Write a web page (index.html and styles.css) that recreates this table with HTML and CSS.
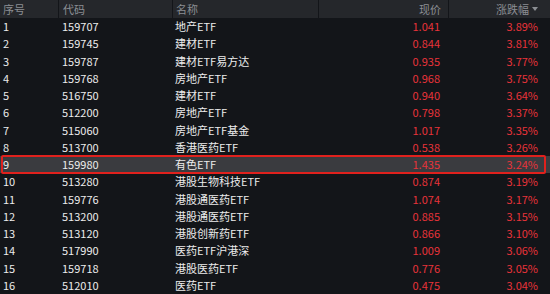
FILE: index.html
```html
<!DOCTYPE html>
<html lang="zh">
<head>
<meta charset="utf-8">
<link rel="stylesheet" href="styles.css">
</head>
<body>
<div class="grid">
  <div class="row head">
    <div class="c idx">序号</div>
    <div class="c code sep">代码</div>
    <div class="c name sep">名称</div>
    <div class="c price sep">现价</div>
    <div class="c pct sep">涨跌幅<span class="arrow"></span></div>
  </div>
  <div class="row"><div class="c idx">1</div><div class="c code">159707</div><div class="c name">地产ETF</div><div class="c price">1.041</div><div class="c pct">3.89%</div></div>
  <div class="row"><div class="c idx">2</div><div class="c code">159745</div><div class="c name">建材ETF</div><div class="c price">0.844</div><div class="c pct">3.81%</div></div>
  <div class="row"><div class="c idx">3</div><div class="c code">159787</div><div class="c name">建材ETF易方达</div><div class="c price">0.935</div><div class="c pct">3.77%</div></div>
  <div class="row"><div class="c idx">4</div><div class="c code">159768</div><div class="c name">房地产ETF</div><div class="c price">0.968</div><div class="c pct">3.75%</div></div>
  <div class="row"><div class="c idx">5</div><div class="c code">516750</div><div class="c name">建材ETF</div><div class="c price">0.940</div><div class="c pct">3.64%</div></div>
  <div class="row"><div class="c idx">6</div><div class="c code">512200</div><div class="c name">房地产ETF</div><div class="c price">0.798</div><div class="c pct">3.37%</div></div>
  <div class="row"><div class="c idx">7</div><div class="c code">515060</div><div class="c name">房地产ETF基金</div><div class="c price">1.017</div><div class="c pct">3.35%</div></div>
  <div class="row"><div class="c idx">8</div><div class="c code">513700</div><div class="c name">香港医药ETF</div><div class="c price">0.538</div><div class="c pct">3.26%</div></div>
  <div class="row sel"><div class="c idx">9</div><div class="c code">159980</div><div class="c name">有色ETF</div><div class="c price">1.435</div><div class="c pct">3.24%</div></div>
  <div class="row"><div class="c idx">10</div><div class="c code">513280</div><div class="c name">港股生物科技ETF</div><div class="c price">0.874</div><div class="c pct">3.19%</div></div>
  <div class="row"><div class="c idx">11</div><div class="c code">159776</div><div class="c name">港股通医药ETF</div><div class="c price">1.074</div><div class="c pct">3.17%</div></div>
  <div class="row"><div class="c idx">12</div><div class="c code">513200</div><div class="c name">港股通医药ETF</div><div class="c price">0.885</div><div class="c pct">3.15%</div></div>
  <div class="row"><div class="c idx">13</div><div class="c code">513120</div><div class="c name">港股创新药ETF</div><div class="c price">0.866</div><div class="c pct">3.10%</div></div>
  <div class="row"><div class="c idx">14</div><div class="c code">517990</div><div class="c name">医药ETF沪港深</div><div class="c price">1.009</div><div class="c pct">3.06%</div></div>
  <div class="row"><div class="c idx">15</div><div class="c code">159718</div><div class="c name">港股医药ETF</div><div class="c price">0.776</div><div class="c pct">3.05%</div></div>
  <div class="row"><div class="c idx">16</div><div class="c code">512010</div><div class="c name">医药ETF</div><div class="c price">0.475</div><div class="c pct">3.04%</div></div>
</div>
</body>
</html>
```
FILE: styles.css
```css
html, body {
  margin: 0;
  padding: 0;
  background: #131519;
  overflow: hidden;
}
.grid {
  width: 550px;
  height: 294px;
  font-family: "Noto Sans CJK SC", "Noto Sans", sans-serif;
  font-size: 11px;
  color: #ececec;
}
.row {
  display: grid;
  grid-template-columns: 58px 114px 146px 130px 102px;
  height: 17.25px;
  align-items: center;
  position: relative;
}
.row.head {
  height: 18px;
  background: #25272b;
  color: #8b8e93;
  align-items: stretch;
}
.head .c {
  display: flex;
  align-items: center;
}
.head .price, .head .pct {
  justify-content: flex-end;
}
.head .sep {
  border-left: 1px solid #131519;
}
.c {
  white-space: nowrap;
  line-height: 17px;
}
.idx { padding-left: 3px; }
.code { padding-left: 4px; }
.name { padding-left: 3px; }
.price {
  text-align: right;
  padding-right: 8px;
  color: #e8333a;
}
.pct {
  text-align: right;
  padding-right: 12px;
  color: #e8333a;
}
.head .price { color: #8b8e93; padding-right: 7px; }
.head .pct { color: #8b8e93; padding-right: 12px; }
.arrow {
  width: 0;
  height: 0;
  border-left: 3px solid transparent;
  border-right: 3px solid transparent;
  border-top: 4px solid #8b8e93;
  margin-left: 3px;
}
.row.sel {
  background: #3a3b3f;
}
.row.sel::after {
  content: "";
  position: absolute;
  left: 1px;
  right: 4px;
  top: -1px;
  bottom: -1px;
  border: 2px solid #e0211d;
  border-radius: 2px;
}
```
